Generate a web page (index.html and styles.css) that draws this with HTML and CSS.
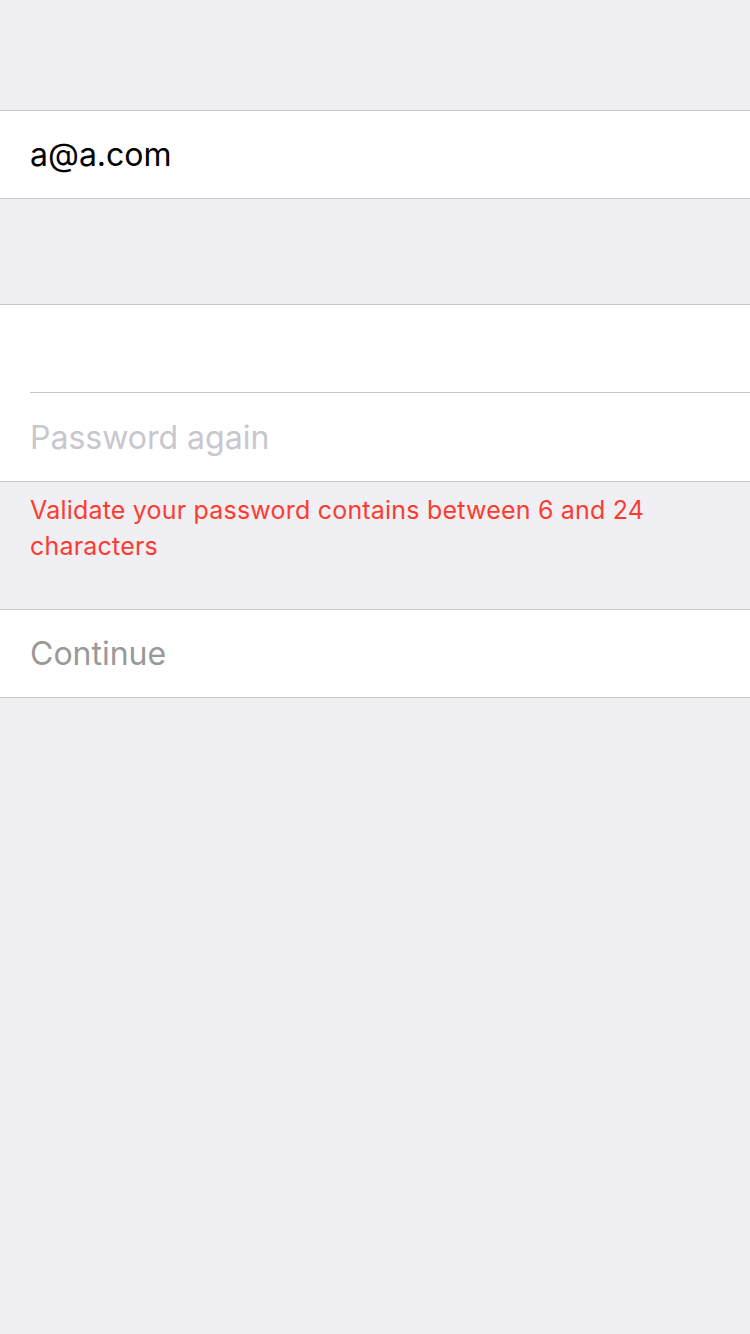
FILE: index.html
```html
<!DOCTYPE html>
<html>
<head>
<meta charset="utf-8">
<link rel="stylesheet" href="styles.css">
</head>
<body>
<div class="page">
  <div class="group group-email">
    <div class="cell"><span class="value">a@a.com</span></div>
  </div>
  <div class="group group-pass">
    <div class="cell cell-sep"><span class="placeholder"></span></div>
    <div class="cell"><span class="placeholder">Password again</span></div>
  </div>
  <div class="error">Validate your password contains between 6 and 24 characters</div>
  <div class="group group-continue">
    <div class="cell"><span class="button">Continue</span></div>
  </div>
</div>
</body>
</html>
```
FILE: styles.css
```css
html, body {
  margin: 0;
  padding: 0;
  background: #efeff4;
}
.page {
  width: 750px;
  min-height: 1334px;
  background: #efeff4;
  font-family: Inter, "Liberation Sans", sans-serif;
  padding-top: 110px;
  box-sizing: border-box;
}
.group {
  background: #fff;
  border-top: 1px solid #c8c7cc;
  border-bottom: 1px solid #c8c7cc;
}
.group-pass {
  margin-top: 105px;
}
.cell {
  height: 87px;
  padding-left: 30px;
  display: flex;
  align-items: center;
  font-size: 32px;
  position: relative;
}
.cell-sep::after {
  content: "";
  position: absolute;
  left: 30px;
  right: 0;
  bottom: -1px;
  height: 1px;
  background: #c8c7cc;
}
.cell-sep + .cell {
  height: 89px;
  padding-top: 1px;
  box-sizing: border-box;
}
.value {
  color: #000;
}
.placeholder {
  color: #c7c7cd;
}
.button {
  color: #999999;
}
.error {
  color: #ff3b30;
  font-size: 25px;
  letter-spacing: 0.2px;
  line-height: 36px;
  padding: 10px 30px 0 30px;
  height: 127px;
  box-sizing: border-box;
}
```
